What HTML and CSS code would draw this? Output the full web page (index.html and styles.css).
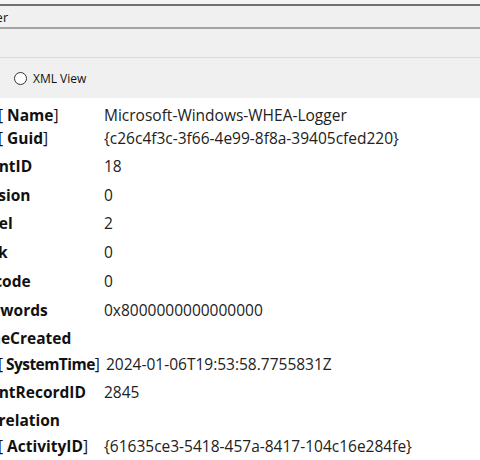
FILE: index.html
```html
<!DOCTYPE html>
<html>
<head>
<meta charset="utf-8">
<link rel="stylesheet" href="styles.css">
</head>
<body>
<div class="window">
  <div class="topstrip"></div>
  <div class="titlebar"><div class="title-wrap"><span class="title">Event 18, WHEA-Logger</span></div></div>
  <div class="tabs"></div>
  <div class="viewbar">
    <label class="radio"><span class="circle"></span><span>XML View</span></label>
  </div>
  <div class="details">
    <div class="group first">
      <div class="row sub"><div class="label">[ <b>Name</b>]</div><div class="value">Microsoft-Windows-WHEA-Logger</div></div>
      <div class="row sub"><div class="label">[ <b>Guid</b>]</div><div class="value">{c26c4f3c-3f66-4e99-8f8a-39405cfed220}</div></div>
    </div>
    <div class="row top"><div class="label"><b>EventID</b></div><div class="value">18</div></div>
    <div class="row top"><div class="label"><b>Version</b></div><div class="value">0</div></div>
    <div class="row top"><div class="label"><b>Level</b></div><div class="value">2</div></div>
    <div class="row top"><div class="label"><b>Task</b></div><div class="value">0</div></div>
    <div class="row top"><div class="label"><b>Opcode</b></div><div class="value">0</div></div>
    <div class="row top"><div class="label"><b>Keywords</b></div><div class="value">0x8000000000000000</div></div>
    <div class="row top"><div class="label"><b>TimeCreated</b></div><div class="value"></div></div>
    <div class="group">
      <div class="row sub"><div class="label tight">[ <b>SystemTime</b>]</div><div class="value">2024-01-06T19:53:58.7755831Z</div></div>
    </div>
    <div class="row top"><div class="label"><b>EventRecordID</b></div><div class="value">2845</div></div>
    <div class="row top"><div class="label"><b>Correlation</b></div><div class="value"></div></div>
    <div class="group">
      <div class="row sub"><div class="label">[ <b>ActivityID</b>]</div><div class="value">{61635ce3-5418-457a-8417-104c16e284fe}</div></div>
    </div>
  </div>
</div>
</body>
</html>
```

FILE: styles.css
```css
html, body {
  margin: 0;
  padding: 0;
  background: #ffffff;
}
.window {
  width: 480px;
  height: 460px;
  overflow: hidden;
  font-family: "Open Sans", "Noto Sans", sans-serif;
  color: #1a1a1a;
}
.topstrip {
  height: 4px;
  background: #f4f4f4;
  border-bottom: 2px solid #717171;
}
.titlebar {
  height: 21px;
  background: #f0f0f0;
  border-bottom: 2px solid #a3a3a3;
  display: flex;
  align-items: center;
}
.title-wrap {
  width: 8px;
  display: flex;
  justify-content: flex-end;
  white-space: nowrap;
  padding-top: 2px;
}
.title {
  font-size: 12.5px;
  color: #111;
}
.tabs {
  height: 28px;
  background: #f0f0f0;
  border-bottom: 1px solid #dadada;
}
.viewbar {
  height: 40px;
  background: #f0f0f0;
  display: flex;
  align-items: center;
  padding-left: 14px;
}
.radio {
  display: flex;
  align-items: center;
  gap: 6px;
  font-size: 12px;
  color: #111;
}
.circle {
  width: 11px;
  height: 11px;
  border: 1px solid #333;
  border-radius: 50%;
  background: #fff;
}
.details {
  margin-left: -28px;
  padding-top: 5px;
  font-size: 15.5px;
}
.row {
  display: flex;
  align-items: center;
  white-space: nowrap;
}
.row.top {
  height: 28.75px;
}
.row.sub {
  height: 23px;
  padding-left: 26px;
}
.group {
  margin-bottom: 1.5px;
}
.group.first {
  margin-bottom: 2.5px;
}
.label {
  color: #111;
  flex-shrink: 0;
}
.row.top .label {
  width: 132px;
}
.row.sub .label {
  min-width: 106px;
}
.label.tight {
  letter-spacing: -0.55px;
  margin-right: 2px;
}
.label b {
  font-weight: 700;
}
.value {
  color: #222;
}
```
